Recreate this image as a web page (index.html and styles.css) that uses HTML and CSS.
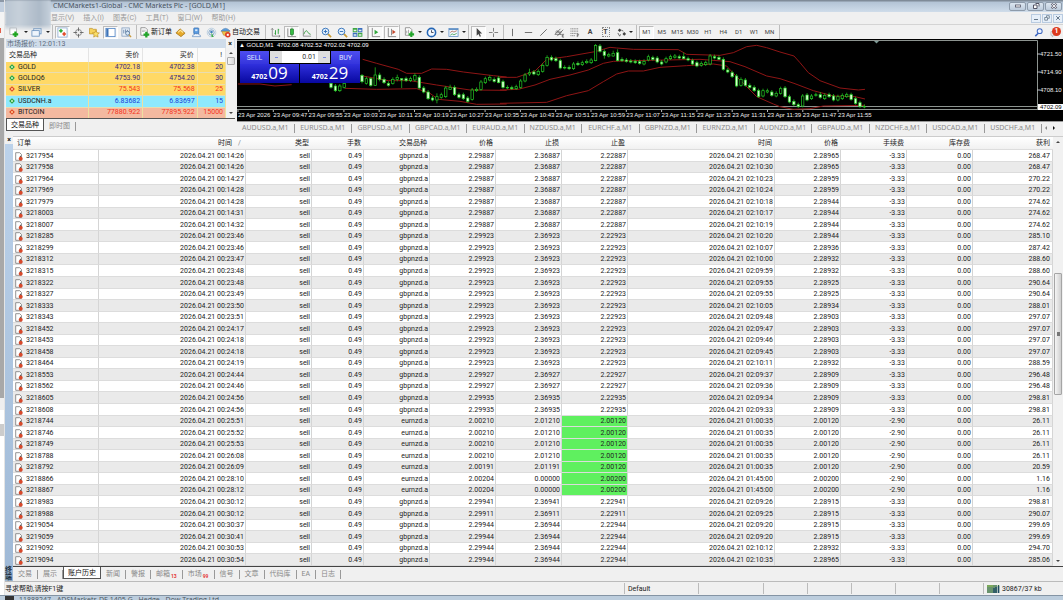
FILE: index.html
```html
<!DOCTYPE html>
<html lang="zh-CN">
<head>
<meta charset="utf-8">
<title>CMCMarkets1-Global - CMC Markets Plc - [GOLD,M1]</title>
<link rel="stylesheet" href="styles.css">
</head>
<body>
<div class="desktop">
  <div class="edge"></div>
  <div class="app">
    <div class="mask"></div>
    <header class="titlebar">
      <h1>CMCMarkets1-Global - CMC Markets Plc - [GOLD,M1]</h1>
      <div class="winbtns">
        <button aria-label="最小化"><svg width="8" height="6" viewBox="0 0 8 6"><rect x="1.5" y="2" width="5" height="2" fill="#fff" stroke="#556" stroke-width=".8"/></svg></button>
        <button aria-label="还原"><svg width="8" height="6" viewBox="0 0 8 6"><path d="M3.5.5h3.500v3M1.500 2h3.500v3.500H1.500z" fill="#fff" stroke="#445" stroke-width=".9"/></svg></button>
        <button aria-label="关闭"><svg width="8" height="6" viewBox="0 0 8 6"><path d="M1.500.8l5 4.500M6.500.8l-5 4.500" stroke="#667" stroke-width="2.200"/><path d="M1.800 1l4.400 4M6.200 1l-4.400 4" stroke="#fff" stroke-width=".9"/></svg></button>
      </div>
    </header>
    <nav class="menubar">
      <button>显示(V)</button><button>插入(I)</button><button>图表(C)</button><button>工具(T)</button><button>窗口(W)</button><button>帮助(H)</button>
      <div class="mdibtns">
        <button aria-label="最小化图表"><svg width="6" height="6" viewBox="0 0 6 6"><path d="M1 4.500h4" stroke="#678" stroke-width="1"/></svg></button>
        <button aria-label="还原图表"><svg width="6" height="6" viewBox="0 0 6 6"><path d="M2.500 2V.7h2.800v2.600H4M.7 2.500h2.800v2.700H.7z" fill="none" stroke="#678" stroke-width=".8"/></svg></button>
        <button aria-label="关闭图表"><svg width="6" height="6" viewBox="0 0 6 6"><path d="M1.200 1.200l3.600 3.600M4.800 1.200L1.200 4.800" stroke="#678" stroke-width="1"/></svg></button>
      </div>
    </nav>
    <div class="toolbar">
      <div class="grp g-file">
        <button class="tb" aria-label="新图表"><svg viewBox="0 0 12 12"><rect x="1" y="1" width="7" height="7" fill="#fff" stroke="#999" stroke-width=".7"/><path d="M7 5v6M4 8h6" stroke="#1fa51f" stroke-width="2.400"/></svg></button><i class="drop"></i>
        <button class="tb" aria-label="配置"><svg viewBox="0 0 12 12"><rect x="3" y="1.500" width="8" height="6" fill="#dce9f7" stroke="#5b87b8" stroke-width=".8"/><rect x="1" y="4" width="8" height="6" fill="#eef5fc" stroke="#5b87b8" stroke-width=".8"/></svg></button><i class="drop"></i>
      </div>
      <div class="grp g-view">
        <button class="tb on" aria-label="市场报价"><svg viewBox="0 0 12 12"><rect x="1" y="1" width="10" height="10" fill="#fff" stroke="#7fa3cc" stroke-width=".8"/><path d="M4.300 1.800l2.300 2.400-2.300 2.400L2 4.200z" fill="#2fae38"/><path d="M7.800 5.200l2.300 2.400-2.300 2.400-2.300-2.400z" fill="#e2502e"/></svg></button>
        <button class="tb" aria-label="数据窗口"><svg viewBox="0 0 12 12"><circle cx="6" cy="6" r="3.300" fill="none" stroke="#777" stroke-width=".9"/><path d="M6 .5v4M6 7.500v4M.5 6h4M7.500 6h4" stroke="#666" stroke-width="1"/></svg></button>
        <button class="tb" aria-label="导航"><svg viewBox="0 0 12 12"><path d="M.5 1.500h3l1 1h3.500v5H.5z" fill="#f6d25c" stroke="#b98a1d" stroke-width=".7"/><path d="M7.500 3.800l1.200 2.400 2.600.3-1.900 1.800.5 2.700-2.400-1.300-2.400 1.300.5-2.700-1.900-1.800 2.600-.3z" fill="#fbe06a" stroke="#b98a1d" stroke-width=".7"/></svg></button>
        <button class="tb on" aria-label="终端"><svg viewBox="0 0 12 12"><rect x="1" y="1.500" width="10" height="9" fill="#fff" stroke="#4d82c4" stroke-width=".9"/><rect x="1.400" y="2" width="2.400" height="8" fill="#3d73b8"/></svg></button>
        <button class="tb" aria-label="策略测试"><svg viewBox="0 0 12 12"><rect x="1" y="1" width="8" height="9" fill="#e9f0f8" stroke="#7b97b8" stroke-width=".8"/><path d="M3 3v4M5 2.500V6M7 3v2" stroke="#5f7fa5" stroke-width=".9"/><circle cx="7.200" cy="6.800" r="2.200" fill="#d5e6f6" stroke="#47688f" stroke-width=".8"/><path d="M8.800 8.500l2.200 2.500" stroke="#c79a3c" stroke-width="1.400"/></svg></button>
      </div>
      <div class="grp g-trade">
        <button class="tb wide"><svg viewBox="0 0 12 12"><path d="M2 .8h5l2 2V9H2z" fill="#fff" stroke="#777" stroke-width=".8"/><path d="M3.300 3.500h4M3.300 5h3" stroke="#999" stroke-width=".7"/><path d="M8 5.200v6.300M4.900 8.400h6.300" stroke="#22a52a" stroke-width="2.500"/></svg>新订单</button>
        <button class="tb" aria-label="编辑器"><svg viewBox="0 0 12 12"><path d="M1 6.500L5.500 2 11 6.800 6.500 10.500z" fill="#e6a92a" stroke="#9a6a10" stroke-width=".7"/><path d="M3.500 5.800l2.300-2.300 3 2.500" fill="none" stroke="#ffe69a" stroke-width="1.200"/></svg></button>
        <button class="tb" aria-label="VPS"><svg viewBox="0 0 12 12"><rect x="3" y="1" width="5.500" height="6.500" rx=".8" fill="#5a9be0" stroke="#2c65ab" stroke-width=".7"/><path d="M4.500 2.500h2.500v2H4.500z" fill="#d7eafc"/><path d="M1.500 10.500q0-2.200 2-2.200 1-1.600 2.700-.8 1.300-.7 2.300.8 2.200 0 2 2.200z" fill="#eef4fb" stroke="#5e88bb" stroke-width=".7"/></svg></button>
        <button class="tb" aria-label="信号"><svg viewBox="0 0 12 12"><circle cx="6" cy="6" r="4.700" fill="none" stroke="#b4c9dd" stroke-width=".9"/><circle cx="6" cy="6" r="2.900" fill="none" stroke="#6d99c4" stroke-width=".9"/><circle cx="6" cy="5.500" r="1.400" fill="#3f7fc0"/><path d="M6 6l2.500 5H6z" fill="#3cae46"/></svg></button>
        <button class="tb wide"><svg viewBox="0 0 12 12"><path d="M1 4.500q5-6 10 0z" fill="#5d9fdd" stroke="#2c66a6" stroke-width=".6"/><path d="M2 5h8l-2 4H4z" fill="#f3c64c" stroke="#a5791b" stroke-width=".6"/><circle cx="8.500" cy="8.500" r="3" fill="#dd3a22"/><rect x="7.400" y="7.400" width="2.200" height="2.200" fill="#fff"/></svg>自动交易</button>
      </div>
      <div class="grp g-type">
        <button class="tb" aria-label="柱状图"><svg viewBox="0 0 12 12"><path d="M2.500 1.500V10H11M1.200 3l1.300-1.500L3.800 3M9.500 8.800L11 10l-1.500 1.200" fill="none" stroke="#777" stroke-width=".8"/><path d="M6 3.500v5M9 2v5.500M6 7h-1M9 3h1" stroke="#2b9b36" stroke-width="1"/></svg></button>
        <button class="tb on" aria-label="蜡烛图"><svg viewBox="0 0 12 12"><path d="M2 1.500V10.500H11" fill="none" stroke="#666" stroke-width=".8"/><path d="M6.500 .8v9" stroke="#1d7a27" stroke-width=".9"/><rect x="4.800" y="2.300" width="3.400" height="5.700" fill="#37bd45" stroke="#1d7a27" stroke-width=".7"/></svg></button>
        <button class="tb" aria-label="折线图"><svg viewBox="0 0 12 12"><path d="M2.500 1.500V10H11" fill="none" stroke="#777" stroke-width=".8"/><path d="M3 8q2.500-6 4-3t3.500 3" fill="none" stroke="#44a04c" stroke-width="1"/></svg></button>
      </div>
      <div class="grp g-zoom">
        <button class="tb" aria-label="放大"><svg viewBox="0 0 12 12"><path d="M7.500 7.500L11 11" stroke="#c99b34" stroke-width="1.900"/><circle cx="4.900" cy="4.900" r="3.600" fill="#e5f1fc" stroke="#2f6fb8" stroke-width="1"/><path d="M4.900 3v3.800M3 4.900h3.800" stroke="#2f6fb8" stroke-width="1"/></svg></button>
        <button class="tb" aria-label="缩小"><svg viewBox="0 0 12 12"><path d="M7.500 7.500L11 11" stroke="#c99b34" stroke-width="1.900"/><circle cx="4.900" cy="4.900" r="3.600" fill="#e5f1fc" stroke="#2f6fb8" stroke-width="1"/><path d="M3 4.900h3.800" stroke="#2f6fb8" stroke-width="1"/></svg></button>
        <button class="tb" aria-label="平铺"><svg viewBox="0 0 12 12"><path d="M.8 1.200h5v4.400h-5zM6.300 6.200h5v4.400h-5z" fill="#3fa743"/><path d="M6.300 1.200h5v4.400h-5zM.8 6.200h5v4.400h-5z" fill="#3a6fc0"/><path d="M1.800 3h3v1.500h-3zM7.300 3h3v1.500h-3zM1.800 8h3v1.500h-3zM7.300 8h3v1.500h-3z" fill="#eaf3ea"/></svg></button>
      </div>
      <div class="grp g-shift">
        <button class="tb on" aria-label="自动滚动"><svg viewBox="0 0 12 12"><path d="M2.500 1v9.500H11" fill="none" stroke="#666" stroke-width=".8"/><path d="M5 3l4 2.600L5 8.200z" fill="#33a73d"/></svg></button>
        <button class="tb on" aria-label="图表平移"><svg viewBox="0 0 12 12"><path d="M2.500 1v9.500H11M6 2v7" fill="none" stroke="#666" stroke-width=".8"/><path d="M7 3l3.500 2.500L7 8z" fill="#c4462a"/></svg></button>
      </div>
      <div class="grp g-ind">
        <button class="tb" aria-label="指标"><svg viewBox="0 0 12 12"><path d="M1.500.8h5l2 2V9h-7z" fill="#fff" stroke="#777" stroke-width=".8"/><path d="M3 7V4M5 7V3" stroke="#888" stroke-width=".8"/><path d="M8 5v6M5 8h6" stroke="#22a52a" stroke-width="2.300"/></svg></button><i class="drop"></i>
        <button class="tb" aria-label="周期"><svg viewBox="0 0 12 12"><circle cx="6" cy="6" r="4.500" fill="#f2f8ff" stroke="#2566b5" stroke-width="1.700"/><path d="M6 3.500V6h2.200" fill="none" stroke="#334" stroke-width=".9"/></svg></button><i class="drop"></i>
        <button class="tb" aria-label="模板"><svg viewBox="0 0 12 12"><rect x="1" y="1.500" width="10" height="9" fill="#eff6fd" stroke="#5a8cc4" stroke-width=".8"/><path d="M1 2.500h10" stroke="#5a8cc4" stroke-width="1.400"/><path d="M2.500 6l2-1.500 2 1 3-1.500" fill="none" stroke="#b0553c" stroke-width=".8"/><path d="M2.500 9l2-1.500 2 1 3-1.500" fill="none" stroke="#3a9a45" stroke-width=".8"/></svg></button><i class="drop"></i>
      </div>
      <div class="grp g-cur">
        <button class="tb on" aria-label="光标"><svg viewBox="0 0 12 12"><path d="M4 1v8.500l2-1.800 1.400 3 1.300-.6-1.400-2.900H10z" fill="#444"/></svg></button>
        <button class="tb" aria-label="十字线"><svg viewBox="0 0 12 12"><path d="M6 1v4M6 7v4M1 6h4M7 6h4" stroke="#777" stroke-width="1"/></svg></button>
      </div>
      <div class="grp g-draw">
        <button class="tb" aria-label="垂直线"><svg viewBox="0 0 12 12"><path d="M6 2v8" stroke="#666" stroke-width="1"/></svg></button>
        <button class="tb" aria-label="水平线"><svg viewBox="0 0 12 12"><path d="M2 6h8" stroke="#666" stroke-width="1"/></svg></button>
        <button class="tb" aria-label="趋势线"><svg viewBox="0 0 12 12"><path d="M2.500 9.500l7-7" stroke="#666" stroke-width="1"/></svg></button>
        <button class="tb" aria-label="通道"><svg viewBox="0 0 12 12"><path d="M1 8l6-6M3.500 10l6.500-7M1.500 5.500h7M1 8h7M3 3.500l5 5" stroke="#555" stroke-width=".8"/><path d="M11 8H9v3h2M9 9.500h1.500" fill="none" stroke="#444" stroke-width=".7"/></svg></button>
        <button class="tb" aria-label="斐波那契"><svg viewBox="0 0 12 12"><path d="M1.500 2h9M1.500 4.500h9M1.500 7h9M1.500 9.500h5" stroke="#666" stroke-width=".8" stroke-dasharray="1.300 .5"/><path d="M11 8H9v3M9 9.500h1.500" fill="none" stroke="#444" stroke-width=".7"/></svg></button>
        <button class="tb tx big"><b>A</b></button>
        <button class="tb tx big"><span class="tlabel">T</span></button>
        <button class="tb" aria-label="图形"><svg viewBox="0 0 12 12"><path d="M4 1.500l2 2-2 2-2-2z" fill="#444"/><path d="M9 5.500l2 2-2 2-2-2z" fill="#444"/><path d="M2 6.500l2 3.500 1-2M6 3.500l2 1" fill="none" stroke="#555" stroke-width=".9"/></svg></button><i class="drop"></i>
      </div>
      <div class="grp g-tf">
        <button class="tb tx on">M1</button><button class="tb tx">M5</button><button class="tb tx">M15</button><button class="tb tx">M30</button><button class="tb tx">H1</button><button class="tb tx">H4</button><button class="tb tx">D1</button><button class="tb tx">W1</button><button class="tb tx">MN</button>
      </div>
      <div class="right">
        <button class="tb" aria-label="搜索"><svg viewBox="0 0 12 12"><path d="M6 6.500L2.500 10" stroke="#3f68c0" stroke-width="1.700"/><circle cx="7.300" cy="4.500" r="2.700" fill="#eef4ff" stroke="#3f68c0" stroke-width="1.100"/></svg></button>
        <button class="tb alert" aria-label="通知"><svg viewBox="0 0 12 12"><path d="M1 5h6v4H4l-1.500 2V9H1z" fill="#eee" stroke="#aaa" stroke-width=".7"/></svg><span>1</span></button>
      </div>
    </div>

    <div class="upper">
      <section class="market">
        <div class="caption"><span>市场报价: 12:01:13</span><button aria-label="关闭市场报价">×</button></div>
        <div class="mbody">
          <div class="mclip">
          <table class="quotes">
            <colgroup><col class="q1"><col class="q2"><col class="q2"><col class="q3"></colgroup>
            <thead><tr><th>交易品种</th><th>卖价</th><th>买价</th><th>!</th></tr></thead>
            <tbody>
              <tr class="gold"><td><i class="up"></i>GOLD</td><td>4702.18</td><td>4702.38</td><td>20</td></tr>
              <tr class="gold"><td><i class="up"></i>GOLDQ6</td><td>4753.90</td><td>4754.20</td><td>30</td></tr>
              <tr class="gold red"><td><i class="dn"></i>SILVER</td><td>75.543</td><td>75.568</td><td>25</td></tr>
              <tr class="cyan"><td><i class="up"></i>USDCNH.a</td><td>6.83682</td><td>6.83697</td><td>15</td></tr>
              <tr class="salmon red"><td><i class="dn"></i>BITCOIN</td><td>77880.922</td><td>77895.922</td><td>15000</td></tr>
            </tbody>
          </table>
          </div>
          <div class="vscroll"><span class="ar-up"></span><span class="mthumb"></span><span class="ar-dn"></span></div>
        </div>
        <div class="tabs"><button class="active">交易品种</button><button>即时图</button></div>
      </section>
      <section class="chartwin">
        <div class="chart">
          <svg class="plot" width="826" height="82" viewBox="0 0 826 82">
            <g class="frame"><path d="M0 1.500h800.500v69.500"/><path d="M0 67.500h800"/><path d="M0 70.500h800.500"/></g>
            <path d="M637 2h5l-2.500 2.500z" fill="#7d9a95"/>
            <g class="bands" transform="translate(-7 -39) scale(.33333)">
              <polyline points="24,252 90,252 135,258 185,254"/>
              <polyline points="398,178 440,190 505,208 530,220 575,220 605,207 650,208 700,216 790,227 830,231"/>
              <polyline points="398,228 475,242 540,242 620,255 720,270 830,271"/>
              <polyline points="345,265 440,268 560,266 600,280 625,298 690,304 740,313 830,312"/>
            </g>
            <g class="bands" transform="translate(263 -39) scale(.33333)">
              <polyline points="0,232 50,232 105,213 140,178 200,170 285,155 330,142 350,144 400,148 535,149 560,163 660,166 700,158 740,140 770,136 800,143 840,156"/>
              <polyline points="0,270 55,268 105,255 150,238 210,225 265,210 310,190 340,184 400,182 600,178 690,185 735,200 800,228 840,236"/>
              <polyline points="0,310 140,307 200,287 265,272 310,245 350,222 385,213 430,213 480,202 560,197 640,192 680,198 700,220 730,250 770,290 820,312 840,320"/>
            </g>
            <g class="bands" transform="translate(543 -39) scale(.33333)">
              <polyline points="0,156 42,168 60,188 85,218 120,242 180,264 235,270 255,268"/>
              <polyline points="0,236 42,250 100,272 160,288 225,290 255,297"/>
              <polyline points="0,320 40,328 90,326 130,318 255,316"/>
            </g>
            <g id="candles"></g>
            <g id="times" class="axis"></g>
            <g class="axis">
              <path d="M800 15h3M800 33h3M800 51h3" stroke="#bbb"/>
              <text x="803" y="17">4721.50</text><text x="803" y="35">4714.90</text><text x="803" y="53">4708.10</text>
              <rect x="801" y="65" width="25" height="6" fill="#fff"/><text x="803" y="70" class="now">4702.09</text>
            </g>
          </svg>
          <div class="ohlc">▲ GOLD,M1&nbsp; 4702.08 4702.52 4702.02 4702.09</div>
          <div class="oneclick">
            <button class="side">SELL</button>
            <label class="vol"><i></i><input type="text" value="0.01" aria-label="手数"><i></i></label>
            <button class="side">BUY</button>
            <button class="px"><small>4702</small>09</button>
            <button class="px"><small>4702</small>29</button>
          </div>
        </div>
        <div class="ctabs">
          <button>AUDUSD.a,M1</button><button>EURUSD.a,M1</button><button>GBPUSD.a,M1</button><button>GBPCAD.a,M1</button><button>EURAUD.a,M1</button><button>NZDUSD.a,M1</button><button>EURCHF.a,M1</button><button>GBPNZD.a,M1</button><button>EURNZD.a,M1</button><button>AUDNZD.a,M1</button><button>GBPAUD.a,M1</button><button>NZDCHF.a,M1</button><button>USDCAD.a,M1</button><button>USDCHF.a,M1</button>
          <span class="ar-l"></span><span class="ar-r"></span>
        </div>
      </section>
    </div>

    <section class="terminal">
      <div class="grip"><button aria-label="关闭终端">×</button><span>终端</span></div>
      <div class="tmain">
        <div class="hwrap">
          <table class="history">
            <colgroup><col class="c86"><col class="c147"><col class="c66"><col class="c52"><col class="c66"><col class="c66"><col class="c66"><col class="c66"><col class="c147"><col class="c66"><col class="c66"><col class="c66"><col class="c80"></colgroup>
            <thead><tr><th>订单</th><th class="sorted">时间<span>/</span></th><th>类型</th><th>手数</th><th>交易品种</th><th>价格</th><th>止损</th><th>止盈</th><th>时间</th><th>价格</th><th>手续费</th><th>库存费</th><th>获利</th></tr></thead>
            <tbody id="orders"></tbody>
          </table>
          <div class="vscroll tall"><span class="ar-up"></span><span class="hthumb"></span><span class="ar-dn"></span></div>
        </div>
        <div class="tabs ttabs"><button>交易</button><button>展示</button><button class="active">账户历史</button><button>新闻</button><button>警报</button><button>邮箱<sub>13</sub></button><button>市场<sub>99</sub></button><button>信号</button><button>文章</button><button>代码库</button><button>EA</button><button>日志</button></div>
      </div>
    </section>
    <footer class="status">
      <span class="help">寻求帮助,请按F1键</span><span class="prof">Default</span><span class="s65"></span><span class="s45"></span><span class="s45"></span><span class="s45"></span><span class="s45"></span><span class="s45"></span>
      <span class="conn"><svg width="13" height="8" viewBox="0 0 13 8"><path d="M1 0v8M3 0v8M5 0v8M7 0v8M9 0v8M11.500 0v8" stroke="#2f6b35" stroke-width="1.400"/><path d="M7 3v5M9 2v6M11.500 1v7" stroke="#1e4a66" stroke-width="1.400"/><path d="M0 1h6" stroke="#8fbf4a" stroke-width="1"/></svg>30867/37 kb</span>
    </footer>
  </div>
</div>
<div class="nextwin"><i></i><span>11888247 - ADSMarkets-DE 1405.G - Hedge - Dow Trading Ltd</span></div>
<script src="app.js"></script>
</body>
</html>
```
FILE: styles.css
```css
* { box-sizing: border-box; }
html, body { height: 100%; }
body {
  margin: 0; overflow: hidden; display: flex; flex-direction: column;
  font: 7px/10px Roboto, "Noto Sans CJK SC", sans-serif;
  color: #222; background: #f0f0f0;
}
button, input { font: inherit; color: inherit; border: 0; padding: 0; margin: 0; background: none; }
button { display: flex; align-items: center; justify-content: center; white-space: nowrap; }
.desktop { flex: 1; min-height: 0; display: flex; }
.edge {
  width: 5px; border-right: 1px solid #e4e4e4;
  background:
    linear-gradient(#e2604c, #e2604c) 0 28px / 1px 5px no-repeat,
    linear-gradient(#8c98a6 0 2px, #c3d0df 2px 12px, #f4f4f4 12px 38px, #a8a8a8 38px 398px, #efefef 398px 410px, #fff 410px 424px, #ccc 424px 436px, #fff 436px);
}
.app { flex: 1; min-width: 0; display: flex; flex-direction: column; position: relative; }
.mask {
  position: absolute; left: 0; top: 0; width: 46px; height: 31px; z-index: 2; filter: blur(1px);
  background: linear-gradient(90deg, #b9c5d1, #c6d0da 30%, #adbac8 75%, #c6d1dc);
  mask-image: linear-gradient(#000 80%, transparent);
}

/* window frame */
.titlebar {
  height: 12px; display: flex; align-items: center; justify-content: space-between; padding-left: 48px;
  background: linear-gradient(#7f8b98 0 1px, #b3c3d5 2px, #cfdcea);
}
.titlebar h1 { margin: 0; font: 7px/10px "Noto Sans", "Open Sans", sans-serif; color: #47525e; }
.winbtns { display: flex; gap: 1px; padding-right: 1px; }
.winbtns button { width: 17px; height: 9px; border: 1px solid #8d9bab; border-radius: 2px; background: linear-gradient(#dde7f1, #bccbdc); }
.menubar { height: 12px; display: flex; align-items: center; gap: 9px; padding-left: 46px; background: #f0f0f0; color: #9a9a9a; }
.mdibtns { margin-left: auto; display: flex; gap: 1px; }
.mdibtns button { width: 10px; height: 9px; border: 1px solid #b9cbe0; background: #e6eff9; }

/* toolbar */
.toolbar { height: 15px; display: flex; background: #f1f1f1; border-top: 1px solid #d4d4d4; }
.grp { display: flex; align-items: center; justify-content: space-between; padding: 0 2px; border-right: 1px solid #bdbdbd; flex: none; }
.g-file { width: 48px; } .g-view { width: 84px; } .g-trade { width: 129px; padding-right: 5px; }
.g-type { width: 51px; } .g-zoom { width: 51px; } .g-shift { width: 32px; padding: 0; }
.g-ind { width: 69px; } .g-cur { width: 35px; } .g-draw { width: 133px; padding: 0 3px 0 1px; } .g-tf { width: 143px; }
.tb { width: 15px; height: 13px; }
.tb svg { width: 11px; height: 11px; flex: none; }
.tb.on { border: 1px solid #bbb; border-right-color: #fff; border-bottom-color: #fff; background: #f9f9f9; }
.tb.wide { width: auto; gap: 1px; color: #111; }
.tb.tx { font: 6px/8px Roboto, sans-serif; color: #444; }
.tb.big { font-size: 7px; }
.tlabel { border: 1px dotted #888; width: 8px; font-weight: 700; }
.drop { width: 4px; border: 2px solid transparent; border-top-color: #222; border-bottom: 0; }
.right { margin-left: auto; display: flex; align-items: center; gap: 2px; }
.alert { position: relative; }
.alert span { position: absolute; right: 2px; top: 1px; width: 9px; height: 9px; border-radius: 50%; background: #dc3a1e; color: #fff; font-weight: 700; line-height: 9px; }

/* scroll bars and small arrows */
.vscroll { width: 9px; flex: none; display: flex; flex-direction: column; align-items: center; padding: 4px 0; background: #f1f1f1; }
.ar-up, .ar-dn { border: 2px solid transparent; width: 4px; }
.ar-up { border-bottom-color: #444; border-top: 0; }
.ar-dn { border-top-color: #444; border-bottom: 0; margin-top: auto; }
.mthumb { width: 8px; height: 8px; margin-top: 3px; border: 1px solid #aaa; border-radius: 1px; background: linear-gradient(90deg, #f6f6f6, #d8d8d8); }
.vscroll.tall { width: 10px; }
.hthumb { width: 8px; height: 29%; margin-top: 130px; border: 1px solid #a5a5a5; border-radius: 1px; background: linear-gradient(#777, #777) center / 3px 4px no-repeat, linear-gradient(90deg, #f5f5f5, #cfcfcf); }

/* market watch */
.upper { display: flex; height: 97px; flex: none; }
.market { width: 229px; flex: none; margin: 0 3px 3px 1px; display: flex; flex-direction: column; }
.caption { height: 9px; display: flex; align-items: center; justify-content: space-between; padding: 0 1px; background: #cfdcea; color: #5c6b7b; }
.caption button { width: 8px; height: 9px; background: #f3f3f3; font-weight: 700; color: #111; }
.mbody { flex: 1; min-height: 0; display: flex; border-bottom: 1px solid #555; }
.mclip { flex: 1; overflow: hidden; }
table { border-collapse: separate; border-spacing: 0; table-layout: fixed; width: 100%; }
th { font-weight: 400; color: #222; }
th, td { padding: 0; text-align: right; white-space: nowrap; }
.quotes { height: 71px; }
.quotes th { height: 14px; background: #fbfbfb; border-right: 1px solid #e4e4e4; padding: 0 3px; }
.quotes td { border-right: 1px solid #eee0a0; border-bottom: 1px solid #e9ddb0; padding-right: 2px; line-height: 9px; }
.quotes th:first-child, .quotes td:first-child { text-align: left; padding-left: 3px; }
.q1 { width: 82px; } .q2 { width: 54px; } .q3 { width: 28px; }
.gold { background: #ffd966; } .cyan { background: #8ee9fd; } .salmon { background: #f4b9a0; }
.gold td { color: #3a2a80; } .cyan td { color: #1a40d8; } .red td { color: #f4331c; }
.quotes tbody td:first-child { color: #222; }
.up, .dn { display: inline-block; width: 4px; height: 4px; margin: 0 4px 0 1px; transform: rotate(45deg); border: 1px solid #1c9a3a; background: #bff0b8; }
.dn { border-color: #d8401f; background: #ffc18a; }

/* tabs */
.tabs { height: 14px; flex: none; display: flex; align-items: center; color: #888; }
.tabs button { padding: 0 5px; border-right: 1px solid #999; height: 9px; }
.tabs .active { height: 12px; align-self: flex-start; color: #111; background: #fff; border: 1px solid #555; border-top: 0; padding: 0 4px; }
.tabs sub { margin-left: 1px; font-size: 5px; font-weight: 700; color: #e43a3a; line-height: 5px; align-self: flex-end; }

/* chart */
.chartwin { flex: 1; min-width: 0; margin-left: -1px; }
.chart { position: relative; height: 83px; background: #000; overflow: hidden; border-bottom: 1px solid #999; }
.plot { display: block; }
.frame path { fill: none; stroke: #8d9490; stroke-width: 1; }
.bands polyline { fill: none; stroke: #8f1515; stroke-width: 3; }
.axis text { font: 6px "Liberation Sans Narrow", "Liberation Sans", sans-serif; fill: #eee; }
.axis .now { fill: #000; }
.ohlc { position: absolute; left: 2px; top: 2px; color: #fff; font: 6px/8px "Liberation Sans Narrow", "Liberation Sans", sans-serif; }
.oneclick { position: absolute; left: 3px; top: 12px; width: 120px; display: grid; grid-template-columns: 29px 31px 31px 29px; background: #000; }
.oneclick button { background: linear-gradient(#4d4df0, #3535dc); color: #dfe3ff; height: 13px; }
.oneclick .vol { grid-column: span 2; display: flex; background: #fff; margin: 0 1px 1px; }
.vol i { width: 12px; background: linear-gradient(#7a8ae0, #7a8ae0) center / 3px 1px no-repeat, #dedede; }
.vol input { flex: 1; min-width: 0; text-align: right; color: #333; padding-right: 2px; }
.oneclick .px { grid-column: span 2; height: 19px; background: linear-gradient(#3030dd, #0808a0); color: #fff; font: 17px/18px "Open Sans", sans-serif; align-items: baseline; gap: 1px; }
.px:nth-child(4) { border-right: 1px solid #000; }
.px small { font: 700 7px/8px "Open Sans", sans-serif; }
.ctabs { height: 12px; display: flex; align-items: center; padding: 0 5px 0 0; color: #8a8a8a; font-family: "Noto Sans", "Open Sans", sans-serif; }
.ctabs button { flex: 1; border-right: 1px solid #999; height: 9px; }
.ar-l, .ar-r { border: 2px solid transparent; height: 4px; margin: 0 3px; }
.ar-l { border-right-color: #888; border-left: 0; }
.ar-r { border-left-color: #111; border-right: 0; }

/* terminal */
.terminal { flex: 1; min-height: 0; display: flex; }
.grip { width: 8px; flex: none; display: flex; flex-direction: column; justify-content: space-between; background: linear-gradient(#bcd2ea, #9fb9d6); }
.grip button { width: 8px; height: 8px; background: #f0f0f0; color: #111; font-weight: 700; }
.grip span { width: 7px; line-height: 7px; overflow-wrap: anywhere; font-weight: 700; color: #203040; }
.tmain { flex: 1; min-width: 0; display: flex; flex-direction: column; border-top: 1px solid #ccc; }
.hwrap { flex: 1; min-height: 0; display: flex; border-bottom: 1px solid #444; background: #fff; }
.history { height: 100%; flex: 1; }
.history th { height: 13px; background: linear-gradient(#fff, #f1f1f1); border-bottom: 1px solid #ddd; padding-right: 3px; }
.history td { border-right: 1px solid #d5d5d5; border-bottom: 1px solid #dcdcdc; padding: 1px 1px 0 0; line-height: 9px; vertical-align: bottom; }
.history th:first-child { text-align: left; padding-left: 4px; }
.history td:first-child { text-align: left; padding-left: 2px; }
.history td:last-child { padding-right: 2px; }
.history tbody tr:nth-child(even) { background: #eaeaea; }
.history .hit { background: #5ff05f; }
.history th span { padding: 0 2px 0 6px; color: #888; }
.history td svg { width: 8px; height: 9px; vertical-align: top; margin-right: 3px; }
.c86 { width: 86px; } .c147 { width: 147px; } .c66 { width: 66px; } .c52 { width: 52px; } .c80 { width: 80px; }

/* status bar */
.status { height: 14px; flex: none; display: flex; align-items: center; border-top: 1px solid #bbb; color: #222; }
.status > span { height: 11px; display: flex; align-items: center; border-right: 1px solid #bbb; flex: none; }
.status .help { flex: 1; }
.prof { width: 74px; padding-left: 3px; }
.s65 { width: 65px; } .s45 { width: 44px; }
.status .conn { width: 79px; border: 0; padding-left: 3px; gap: 2px; }
.nextwin { height: 5px; flex: none; overflow: hidden; display: flex; gap: 5px; padding-left: 5px; border-top: 1px solid #8494a4; background: #bccddd; color: #4a5560; }
.nextwin i { width: 9px; height: 8px; background: #333; flex: none; }
.nextwin span { font: 7px/8px "Open Sans", sans-serif; }
```
FILE: app.js
```js
// order, open time, symbol, price, S/L, T/P, close time, close price, commission, profit
const orders = `3217954 14:26 gbpnzd.a 2.29887 2.36887 2.22887 02:10:30 2.28965 -3.33 268.47
3217958 14:26 gbpnzd.a 2.29887 2.36887 2.22887 02:10:30 2.28965 -3.33 268.47
3217964 14:27 gbpnzd.a 2.29887 2.36887 2.22887 02:10:23 2.28959 -3.33 270.22
3217969 14:28 gbpnzd.a 2.29887 2.36887 2.22887 02:10:24 2.28959 -3.33 270.22
3217979 14:28 gbpnzd.a 2.29887 2.36887 2.22887 02:10:18 2.28944 -3.33 274.62
3218003 14:31 gbpnzd.a 2.29887 2.36887 2.22887 02:10:17 2.28944 -3.33 274.62
3218007 14:32 gbpnzd.a 2.29887 2.36887 2.22887 02:10:19 2.28944 -3.33 274.62
3218285 23:46 gbpnzd.a 2.29923 2.36923 2.22923 02:10:20 2.28944 -3.33 285.10
3218299 23:46 gbpnzd.a 2.29923 2.36923 2.22923 02:10:07 2.28936 -3.33 287.42
3218312 23:47 gbpnzd.a 2.29923 2.36923 2.22923 02:10:00 2.28932 -3.33 288.60
3218315 23:48 gbpnzd.a 2.29923 2.36923 2.22923 02:09:59 2.28932 -3.33 288.60
3218322 23:48 gbpnzd.a 2.29923 2.36923 2.22923 02:09:55 2.28925 -3.33 290.64
3218327 23:49 gbpnzd.a 2.29923 2.36923 2.22923 02:09:55 2.28925 -3.33 290.64
3218333 23:50 gbpnzd.a 2.29923 2.36923 2.22923 02:10:05 2.28934 -3.33 288.01
3218343 23:51 gbpnzd.a 2.29923 2.36923 2.22923 02:09:48 2.28903 -3.33 297.07
3218452 24:17 gbpnzd.a 2.29923 2.36923 2.22923 02:09:47 2.28903 -3.33 297.07
3218453 24:18 gbpnzd.a 2.29923 2.36923 2.22923 02:09:46 2.28903 -3.33 297.07
3218458 24:18 gbpnzd.a 2.29923 2.36923 2.22923 02:09:45 2.28903 -3.33 297.07
3218464 24:19 gbpnzd.a 2.29923 2.36923 2.22923 02:10:11 2.28932 -3.33 288.59
3218553 24:44 gbpnzd.a 2.29927 2.36927 2.22927 02:09:37 2.28909 -3.33 296.48
3218562 24:46 gbpnzd.a 2.29927 2.36927 2.22927 02:09:36 2.28909 -3.33 296.48
3218605 24:56 gbpnzd.a 2.29935 2.36935 2.22935 02:09:34 2.28909 -3.33 298.81
3218608 24:56 gbpnzd.a 2.29935 2.36935 2.22935 02:09:33 2.28909 -3.33 298.81
3218744 25:51 eurnzd.a 2.00210 2.01210 2.00120 01:00:35 2.00120 -2.90 26.11
3218746 25:52 eurnzd.a 2.00210 2.01210 2.00120 01:00:35 2.00120 -2.90 26.11
3218749 25:53 eurnzd.a 2.00210 2.01210 2.00120 01:00:35 2.00120 -2.90 26.11
3218788 26:08 eurnzd.a 2.00210 2.01210 2.00120 01:00:35 2.00120 -2.90 26.11
3218792 26:09 eurnzd.a 2.00191 2.01191 2.00120 01:00:35 2.00120 -2.90 20.59
3218866 28:10 eurnzd.a 2.00204 0.00000 2.00200 01:45:00 2.00200 -2.90 1.16
3218867 28:12 eurnzd.a 2.00204 0.00000 2.00200 01:45:00 2.00200 -2.90 1.16
3218983 30:12 gbpnzd.a 2.29941 2.36941 2.22941 02:09:26 2.28915 -3.33 298.81
3218988 30:12 gbpnzd.a 2.29911 2.36911 2.22911 02:09:25 2.28915 -3.33 290.07
3219054 30:37 gbpnzd.a 2.29944 2.36944 2.22944 02:09:20 2.28915 -3.33 299.69
3219059 30:41 gbpnzd.a 2.29944 2.36944 2.22944 02:09:20 2.28915 -3.33 299.69
3219092 30:53 gbpnzd.a 2.29944 2.36944 2.22944 02:10:12 2.28932 -3.33 294.70
3219094 30:54 gbpnzd.a 2.29944 2.36944 2.22944 02:10:35 2.28965 -3.33 285.06`;
const icon = '<svg viewBox="0 0 8 9"><path d="M.7.7h4l1.800 1.800v5.800H.7z" fill="#fff" stroke="#777" stroke-width=".8"/><path d="M4.500 4.500l1.500-1v2z" fill="#555"/><circle cx="5.700" cy="6.700" r="2" fill="#d9492a"/></svg>';
document.getElementById('orders').innerHTML = orders.split('\n').map(line => {
  const [id, open, sym, price, sl, tp, close, cprice, fee, profit] = line.split(' ');
  const hit = tp === cprice ? ' class="hit"' : '';
  return `<tr><td>${icon}${id}</td><td>2026.04.21 00:${open}</td><td>sell</td><td>0.49</td><td>${sym}</td><td>${price}</td><td>${sl}</td><td${hit}>${tp}</td><td>2026.04.21 ${close}</td><td>${cprice}</td><td>${fee}</td><td>0.00</td><td>${profit}</td></tr>`;
}).join('');

// body top, body bottom, 1 = falling, then optional high and low (third-pixel units)
const candles = [
  { x: 303, s: '250,262,1 258,272,1 258,272,0 250,262,0' },
  { x: 396, s: '226,245,1,222,250 236,250,0 236,256,1,232,260 225,256,0,202,258 225,238,1,218,244 238,248,1 250,256,1 238,250,0 232,238,0,224,244 236,240,1,234,264 236,242,1 236,242,0 226,240,0 232,264,1 264,276,1 276,296,1 294,300,1 290,300,0,280,310 284,292,0 264,290,0 262,268,0,254,270 262,284,1 284,292,1 284,296,1 294,304,1 270,298,0 268,272,0 246,268,0 236,248,0 232,240,0 238,244,1 234,248,1,228,250 245,262,1 262,264,1 263,266,1 260,266,0 243,262,0 225,243,0 218,222,0,206,228 216,222,1 214,224,0 196,214,0 172,196,0 172,180,1 176,182,1 182,204,1 202,204,1 202,206,1 192,206,0 190,194,1 188,194,0 184,188,0 180,188,0 136,182,0,132,184 138,154,1 154,166,1,148,176 164,168,0 160,168,0,152,170 158,182,1,148,184 178,182,1 180,184,1 183,186,1 184,188,1 185,190,1 184,192,0 170,180,0 173,178,1 174,186,1 186,192,1 176,186,0 170,176,0 168,172,0 170,174,1 170,176,1,158,178 176,180,1 182,192,1 188,198,1 190,196,0 188,194,0 168,192,0 170,174,1,164,178 172,178,1,166,180 178,208,1 210,216,1 218,230,1 228,258,1 238,256,0 240,256,1 256,262,1 262,272,1 272,290,1 272,288,0 272,276,0 276,286,1 280,288,0 266,280,0 264,290,1 290,306,1 304,314,1 314,320,1 288,318,0 285,300,1 288,296,0 284,286,0 284,292,1,276,296 286,296,0 284,290,1 288,300,1 290,300,0 286,296,0 284,290,0 284,298,1 296,310,1 308,320,1 319,321,1' }
];
let out = '';
for (const run of candles) {
  run.s.split(' ').forEach((c, i) => {
    const [top, bottom, falling, high = top - 6, low = bottom + 4] = c.split(',').map(Number);
    const x = (run.x + i * 13.22) / 3 - 7, y = v => v / 3 - 39;
    out += `<path d="M${x} ${y(high)}V${y(low)}" stroke="#1fb81f" stroke-width=".8"/>` +
      `<rect x="${x - 1.2}" y="${y(top)}" width="2.4" height="${(bottom - top) / 3}" fill="${falling ? '#d8ffd0' : '#000'}" stroke="#25c825" stroke-width=".7"/>`;
  });
}
document.getElementById('candles').innerHTML = out;

const times = ['2026', '09:47', '09:55', '10:03', '10:11', '10:19', '10:27', '10:35', '10:43', '10:51', '10:59', '11:07', '11:15', '11:23', '11:31', '11:39', '11:47', '11:55'];
document.getElementById('times').innerHTML = times.map((t, i) => {
  const x = 1 + i * 35.3;
  return `<path d="M${x} 71v2" stroke="#bbb"/><text x="${x}" y="78">23 Apr ${t}</text>`;
}).join('');
```
